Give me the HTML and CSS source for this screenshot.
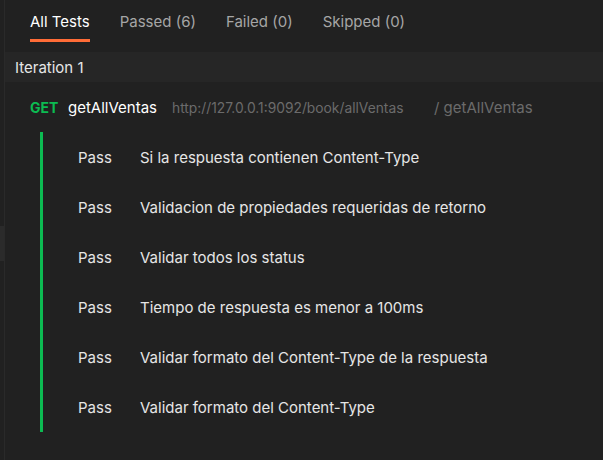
FILE: index.html
```html
<!DOCTYPE html>
<html>
<head>
<meta charset="utf-8">
<link rel="stylesheet" href="styles.css">
</head>
<body>
<div class="grip"></div>
<div class="panel">
  <div class="tabs">
    <div class="tab active">All Tests</div>
    <div class="tab">Passed (6)</div>
    <div class="tab">Failed (0)</div>
    <div class="tab">Skipped (0)</div>
  </div>
  <div class="iteration">Iteration 1</div>
  <div class="request">
    <span class="method">GET</span>
    <span class="name">getAllVentas</span>
    <span class="url">http://127.0.0.1:9092/book/allVentas</span>
    <span class="path">/ getAllVentas</span>
  </div>
  <div class="results">
    <div class="row"><span class="status">Pass</span><span class="desc">Si la respuesta contienen Content-Type</span></div>
    <div class="row"><span class="status">Pass</span><span class="desc">Validacion de propiedades requeridas de retorno</span></div>
    <div class="row"><span class="status">Pass</span><span class="desc">Validar todos los status</span></div>
    <div class="row"><span class="status">Pass</span><span class="desc">Tiempo de respuesta es menor a 100ms</span></div>
    <div class="row"><span class="status">Pass</span><span class="desc">Validar formato del Content-Type de la respuesta</span></div>
    <div class="row"><span class="status">Pass</span><span class="desc">Validar formato del Content-Type</span></div>
  </div>
</div>
</body>
</html>
```
FILE: styles.css
```css
html, body {
  margin: 0;
  padding: 0;
  background: #212121;
  height: 100%;
}
body {
  font-family: Inter, "Noto Sans", sans-serif;
  color: #e6e6e6;
  position: relative;
  overflow: hidden;
}
.grip {
  position: absolute;
  left: 0;
  top: 226px;
  width: 4px;
  height: 35px;
  background: #2b2b2b;
}
.panel {
  margin-left: 4px;
  border-left: 1px solid #2a2a2a;
  min-height: 460px;
}
.tabs {
  display: flex;
  gap: 30px;
  padding-left: 25px;
  height: 52px;
}
.tab {
  font-size: 15px;
  color: #a6a6a6;
  height: 39px;
  line-height: 44px;
  border-bottom: 3px solid transparent;
}
.tab.active {
  color: #ffffff;
  border-bottom-color: #ff6c37;
}
.iteration {
  background: #262626;
  height: 30px;
  line-height: 31px;
  padding-left: 10px;
  font-size: 15px;
  color: #e6e6e6;
}
.request {
  display: flex;
  align-items: baseline;
  height: 50px;
  padding-left: 25px;
  line-height: 52px;
}
.method {
  color: #0cbb52;
  font-weight: 700;
  font-size: 14px;
  width: 38px;
}
.name {
  font-size: 15px;
  color: #ffffff;
  width: 104px;
}
.url {
  font-size: 13.8px;
  color: #6b6b6b;
  width: 262px;
}
.path {
  font-size: 15px;
  color: #6b6b6b;
}
.results {
  margin-left: 35px;
  border-left: 3px solid #0cbb52;
}
.row {
  display: flex;
  height: 50px;
  line-height: 52px;
  padding-left: 35px;
  font-size: 15px;
  color: #e6e6e6;
}
.status {
  width: 62px;
}
```
